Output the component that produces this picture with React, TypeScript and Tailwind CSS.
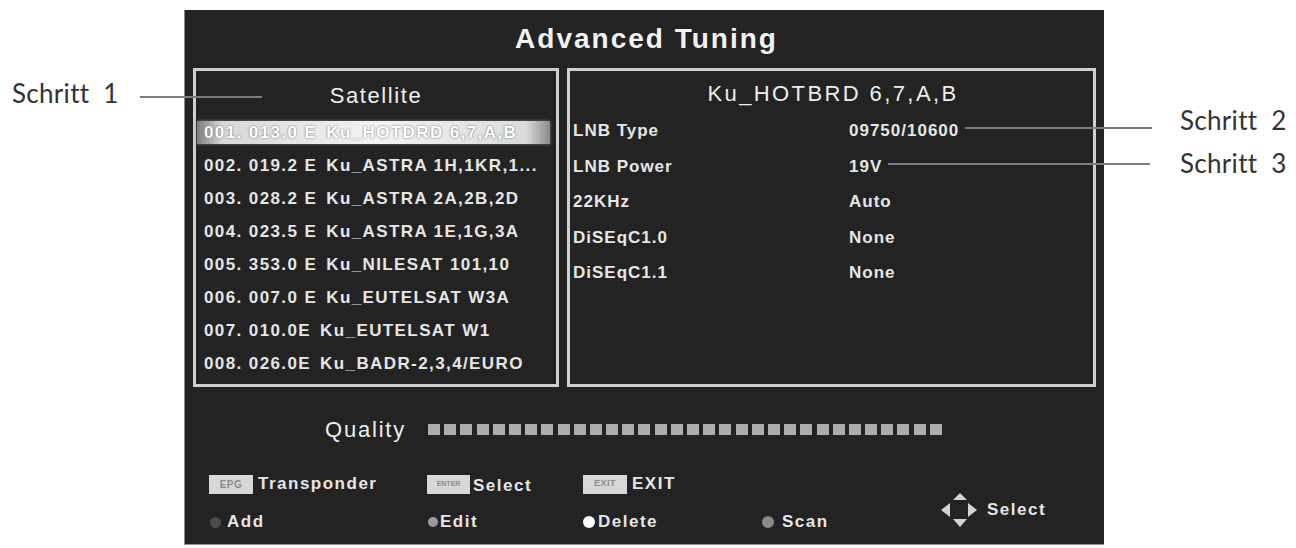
import React from "react";

const sats: [string, string][] = [
  ["001. 013.0 E", "Ku_HOTDRD 6,7,A,B"],
  ["002. 019.2 E", "Ku_ASTRA 1H,1KR,1..."],
  ["003. 028.2 E", "Ku_ASTRA 2A,2B,2D"],
  ["004. 023.5 E", "Ku_ASTRA 1E,1G,3A"],
  ["005. 353.0 E", "Ku_NILESAT 101,10"],
  ["006. 007.0 E", "Ku_EUTELSAT W3A"],
  ["007. 010.0E", "Ku_EUTELSAT W1"],
  ["008. 026.0E", "Ku_BADR-2,3,4/EURO"],
];

const params: [string, string][] = [
  ["LNB Type", "09750/10600"],
  ["LNB Power", "19V"],
  ["22KHz", "Auto"],
  ["DiSEqC1.0", "None"],
  ["DiSEqC1.1", "None"],
];

function Arrows() {
  return (
    <svg width="36" height="34" viewBox="0 0 36 34" className="shrink-0">
      <polygon points="19,0 12,7 26,7" fill="#d4d4d4" />
      <polygon points="19,34 12,26 26,26" fill="#d4d4d4" />
      <polygon points="0,17 9,10 9,24" fill="#d4d4d4" />
      <polygon points="36,17 27,10 27,24" fill="#d4d4d4" />
    </svg>
  );
}

export default function App() {
  const squares = Array.from({ length: 32 });
  return (
    <div className="relative w-[1296px] h-[548px] bg-white overflow-hidden font-['Liberation_Sans',Arial,sans-serif]">
      <div className="pl-[184px] pt-[10px]">
        <div className="w-[920px] h-[535px] bg-[#232323] border-l border-b border-[#8c8c8c] flex flex-col text-[#e6e6e6]">
          {/* Title */}
          <div className="h-[58px] flex items-center justify-center pl-[4px] text-[28px] font-bold tracking-[2px] text-[#f2f2f2]">
            Advanced Tuning
          </div>

          {/* Panels */}
          <div className="flex gap-[8px] ml-[8px] h-[319px]">
            <div className="w-[366px] border-[3px] border-[#d0d0d0] flex flex-col">
              <div className="h-[45px] flex items-center justify-center pt-[3px] text-[22px] tracking-[1.6px] text-[#eeeeee]">
                Satellite
              </div>
              {sats.map(([code, name], i) => (
                <div key={code} className="h-[33px] flex items-center pl-[1px]">
                  <div
                    className={
                      i === 0
                        ? "h-[23px] w-[353px] flex items-center pl-[7px] text-[17px] font-bold tracking-[1.4px] whitespace-pre text-white [text-shadow:0_0_2px_#555] bg-[linear-gradient(90deg,#7c7c7c_0%,#d8d8d8_7%,#f3f3f3_50%,#dcdcdc_93%,#8a8a8a_100%)] shadow-[0_0_3px_#777]"
                        : "h-[23px] w-[353px] flex items-center pl-[7px] text-[17px] font-bold tracking-[1.4px] whitespace-pre"
                    }
                  >
                    <span>{code}</span>
                    <span className="ml-[9px]">{name}</span>
                  </div>
                </div>
              ))}
            </div>

            <div className="w-[529px] border-[3px] border-[#d0d0d0] flex flex-col">
              <div className="h-[42px] flex items-center justify-center pt-[2px] pl-[3px] text-[22px] tracking-[2.4px] text-[#eeeeee]">
                Ku_HOTBRD 6,7,A,B
              </div>
              {params.map(([label, value]) => (
                <div key={label} className="h-[35.5px] flex items-center pl-[3px] text-[17px] font-bold tracking-[1px]">
                  <span className="w-[276px]">{label}</span>
                  <span>{value}</span>
                </div>
              ))}
            </div>
          </div>

          {/* Quality */}
          <div className="mt-[30px] h-[24px] flex items-center pl-[140px]">
            <span className="w-[103px] text-[22px] tracking-[1.8px] text-[#eeeeee]">Quality</span>
            <div className="flex gap-[4.2px]">
              {squares.map((_, i) => (
                <div key={i} className="w-[12px] h-[11px] bg-[#adadad]" />
              ))}
            </div>
          </div>

          {/* Legend */}
          <div className="mt-[24px] flex pl-[23px] text-[17px] font-bold tracking-[1.5px]">
            <div className="w-[219px] flex flex-col">
              <div className="h-[38px] flex items-center">
                <span className="ml-[1px] w-[44px] h-[19px] bg-[#d8d8d8] text-[#8c8c8c] text-[10px] tracking-[0.5px] flex items-center justify-center">EPG</span>
                <span className="ml-[5px]">Transponder</span>
              </div>
              <div className="h-[38px] flex items-center">
                <span className="ml-[2px] w-[11px] h-[11px] rounded-full bg-[#4a4a4a]" />
                <span className="ml-[6px]">Add</span>
              </div>
            </div>
            <div className="w-[156px] flex flex-col">
              <div className="h-[38px] flex items-center">
                <span className="w-[43px] h-[19px] bg-[#d8d8d8] text-[#8c8c8c] text-[7px] tracking-[0px] flex items-center justify-center">ENTER</span>
                <span className="ml-[3px] pt-[4px]">Select</span>
              </div>
              <div className="h-[38px] flex items-center">
                <span className="ml-[1px] w-[10px] h-[10px] rounded-full bg-[#9a9a9a]" />
                <span className="ml-[2px]">Edit</span>
              </div>
            </div>
            <div className="w-[179px] flex flex-col">
              <div className="h-[38px] flex items-center">
                <span className="w-[44px] h-[19px] bg-[#d8d8d8] text-[#8c8c8c] text-[9px] tracking-[0.5px] flex items-center justify-center">EXIT</span>
                <span className="ml-[5px]">EXIT</span>
              </div>
              <div className="h-[38px] flex items-center">
                <span className="w-[12px] h-[12px] rounded-full bg-white" />
                <span className="ml-[3px]">Delete</span>
              </div>
            </div>
            <div className="w-[179px] flex flex-col">
              <div className="h-[38px]" />
              <div className="h-[38px] flex items-center">
                <span className="w-[12px] h-[12px] rounded-full bg-[#8a8a8a]" />
                <span className="ml-[8px]">Scan</span>
              </div>
            </div>
            <div className="h-[76px] flex items-center pt-[14px]">
              <Arrows />
              <span className="ml-[10px]">Select</span>
            </div>
          </div>
        </div>
      </div>

      {/* Annotations */}
      <div className="absolute left-[12px] top-[79px] text-[26px] leading-[28px] tracking-[0.3px] text-[#333333] whitespace-pre font-['Lato',sans-serif]">
        Schritt  1
      </div>
      <div className="absolute left-[140px] top-[96px] w-[122px] h-[2px] bg-[#7c7c7c]" />

      <div className="absolute left-[1180px] top-[106px] text-[26px] leading-[28px] tracking-[0.3px] text-[#333333] whitespace-pre font-['Lato',sans-serif]">
        Schritt  2
      </div>
      <div className="absolute left-[965px] top-[127px] w-[187px] h-[2px] bg-[#7c7c7c]" />

      <div className="absolute left-[1180px] top-[149px] text-[26px] leading-[28px] tracking-[0.3px] text-[#333333] whitespace-pre font-['Lato',sans-serif]">
        Schritt  3
      </div>
      <div className="absolute left-[888px] top-[163px] w-[262px] h-[2px] bg-[#7c7c7c]" />
    </div>
  );
}
